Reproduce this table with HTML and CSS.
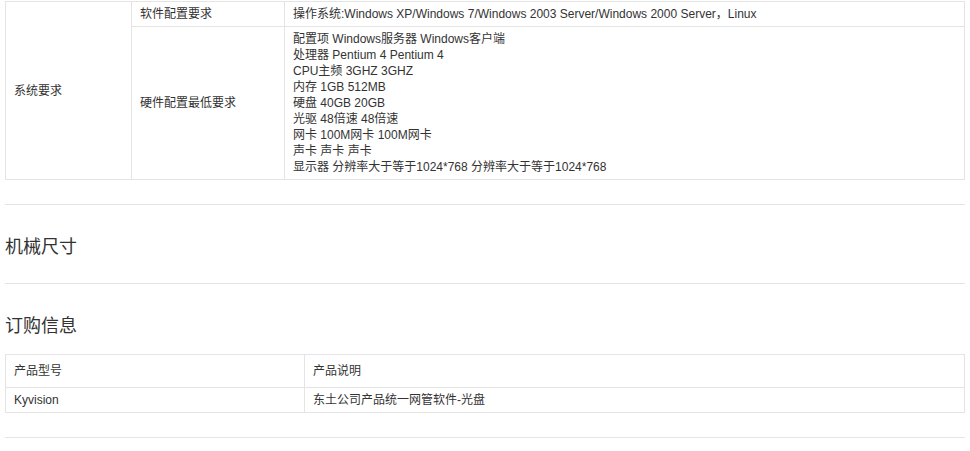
FILE: index.html
```html
<!DOCTYPE html>
<html>
<head>
<meta charset="utf-8">
<meta name="viewport" content="width=device-width, initial-scale=1">
<link rel="stylesheet" href="styles.css">
</head>
<body>

<div class="page">

  <div class="block">
    <table class="spec">
      <tr>
        <td class="c1" rowspan="2">系统要求</td>
        <td class="c2">软件配置要求</td>
        <td>操作系统:Windows XP/Windows 7/Windows 2003 Server/Windows 2000 Server，Linux</td>
      </tr>
      <tr>
        <td class="c2">硬件配置最低要求</td>
        <td>
          配置项 Windows服务器 Windows客户端<br>
          处理器 Pentium 4 Pentium 4<br>
          CPU主频 3GHZ 3GHZ<br>
          内存 1GB 512MB<br>
          硬盘 40GB 20GB<br>
          光驱 48倍速 48倍速<br>
          网卡 100M网卡 100M网卡<br>
          声卡 声卡 声卡<br>
          显示器 分辨率大于等于1024*768 分辨率大于等于1024*768
        </td>
      </tr>
    </table>
  </div>

  <div class="block section">
    <h3>机械尺寸</h3>
  </div>

  <div class="block section">
    <h3>订购信息</h3>
    <table class="spec order">
      <tr class="head">
        <td class="o1">产品型号</td>
        <td>产品说明</td>
      </tr>
      <tr>
        <td class="o1">Kyvision</td>
        <td>东土公司产品统一网管软件-光盘</td>
      </tr>
    </table>
  </div>

  <div class="rule"></div>

</div>

</body>
</html>
```

FILE: styles.css
```css
body {
  margin: 0;
  background: #fff;
  color: #333;
  font-family: "Liberation Sans", "Noto Sans CJK SC", sans-serif;
  font-size: 12px;
}

.page {
  padding: 0 5px;
}

.block {
  padding-bottom: 24px;
}

.section {
  border-top: 1px solid #e4e4e4;
  padding-top: 30px;
}

.rule {
  border-top: 1px solid #e4e4e4;
}

.section h3 {
  margin: 0;
  font-size: 18px;
  font-weight: normal;
  line-height: 24px;
  color: #333;
}

.spec {
  width: 100%;
  border-collapse: collapse;
  margin-top: 1px;
}

.spec td {
  border: 1px solid #e4e4e4;
  padding: 4px 8px;
  line-height: 16px;
  vertical-align: middle;
}

.spec .c1 {
  width: 109px;
}

.spec .c2 {
  width: 136px;
}

.order {
  margin-top: 16px;
}

.order .o1 {
  width: 282px;
}

.order .head td {
  padding-top: 8px;
  padding-bottom: 8px;
}
```
